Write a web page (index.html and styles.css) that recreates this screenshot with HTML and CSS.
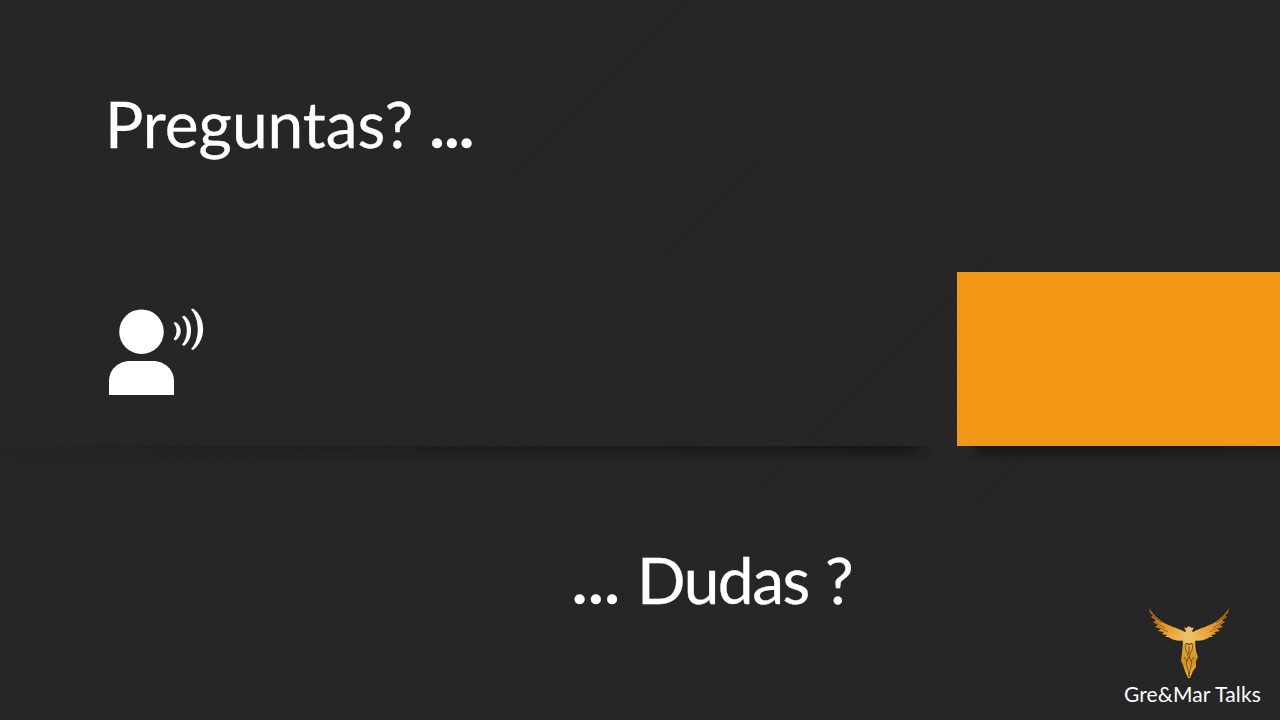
FILE: index.html
```html
<!DOCTYPE html>
<html lang="es">
<head>
<meta charset="utf-8">
<title>Preguntas</title>
<link rel="stylesheet" href="styles.css">
</head>
<body>
<main class="slide">
  <section class="top">
    <div class="left">
      <h1 class="title">Preguntas? <span class="dots">...</span></h1>
      <svg class="speaker" width="96" height="88" viewBox="0 0 96 88" fill="#fff">
        <circle cx="33.500" cy="23.700" r="22.300"/>
        <path d="M1 87V73C1 62 10 53 22 53H45C57 53 66 62 66 73V87Z"/>
        <path d="M65.500 15L67.500 14C74.500 18 74.500 28 67.500 32.500L65.500 31C69.500 27 69.500 19 65.500 15Z"/>
        <path d="M74 9L76 7.500C85.500 14 85.500 31 76 38L74 36.500C80.500 30 80.500 15 74 9Z"/>
        <path d="M83 1.500L85 .5C98.500 10 98.500 32 85 42L83 41C92 32 92 11 83 1.500Z"/>
      </svg>
    </div>
    <div class="accent"></div>
  </section>
  <section class="bottom">
    <p class="dudas"><span class="dots">...</span> <span class="word">Dudas</span> ?</p>
    <div class="brand">
      <svg class="phoenix" width="84" height="74" viewBox="0 0 84 74">
        <defs>
          <linearGradient id="wing" gradientUnits="userSpaceOnUse" x1="2" y1="2" x2="38" y2="32">
            <stop offset="0" stop-color="#a85c0c"/>
            <stop offset=".4" stop-color="#e8921f"/>
            <stop offset="1" stop-color="#ecc064"/>
          </linearGradient>
          <linearGradient id="tail" x1="0" y1="0" x2="0" y2="1">
            <stop offset="0" stop-color="#e6ae4a"/>
            <stop offset=".55" stop-color="#d0901f"/>
            <stop offset="1" stop-color="#f2b84a"/>
          </linearGradient>
          <g id="half">
            <path fill="url(#wing)" d="M1 1C4 6 8 10 13 14C20 19 30 21 37 25L38 33C31 35 25 33 20 30L17 30L19 28L14 27L16 25L10 24L13 22L7 20L10 18L5 15L8 13L3 10L5 8L2 6Z"/>
            <path fill="none" stroke="#262626" stroke-width=".5" d="M5 9L14 16M6 14L17 21M9 19L20 25"/>
            <path fill="#e9b95e" d="M33 24L38 26L39 36L35 36Z"/>
          </g>
        </defs>
        <use href="#half"/>
        <use href="#half" transform="matrix(-1 0 0 1 82 0)"/>
        <path fill="#ecc066" d="M36 20.500L38.500 21L40 19.500L42 19.500L43.500 21L46 20.500L44 24L47 27L45 35L41 37L37 35L35 27L38 24Z"/>
        <path fill="url(#tail)" d="M35 35L41 38L47 35L48 44L50 50L48 54L48 60L45 64L42 71L40 71L37 64L35 58L33 54L34 46Z"/>
        <g fill="none" stroke="#5a3c10" stroke-width=".8">
          <path d="M38 37C35 44 43 47 39 54C37 58 41 62 41 70"/>
          <path d="M44 37C47 44 38 47 43 54C45 58 41 62 41 70"/>
          <path d="M41 39V47M36 50L39 54M46 50L43 54"/>
        </g>
      </svg>
      <p class="brand-name">Gre&amp;Mar Talks</p>
    </div>
  </section>
</main>
</body>
</html>
```

FILE: styles.css
```css
* { box-sizing: border-box; }
html, body { margin: 0; height: 100%; overflow: hidden; background: #252525; }
.slide {
  width: 1280px;
  height: 720px;
  display: flex;
  flex-direction: column;
  color: #fff;
  font-family: "Lato", "Open Sans", "DejaVu Sans", sans-serif;
  background-color: #252525;
  background-image: repeating-linear-gradient(135deg, rgba(255,255,255,.006) 0 2px, rgba(0,0,0,.012) 2px 4px);
}
.top { height: 446px; display: flex; flex: none; gap: 27px; }
.left {
  width: 930px;
  display: flex;
  flex-direction: column;
  padding: 88px 0 0 105px;
  position: relative;
}
.left::after, .accent::after {
  content: "";
  position: absolute;
  top: 100%;
  height: 16px;
  pointer-events: none;
}
.left::after {
  left: 0; right: -4px;
  background:
    linear-gradient(to right, rgba(37,37,37,.95) 0, rgba(37,37,37,.7) 25%, rgba(37,37,37,.25) 70%, rgba(37,37,37,0) 92%, rgba(37,37,37,0) 97%, rgba(37,37,37,1) 100%),
    linear-gradient(to bottom, #171717, #252525);
}
.accent { width: 323px; background: #f29616; position: relative; margin-top: 272px; }
.accent::after {
  left: 12px; right: 0;
  background:
    linear-gradient(to right, rgba(37,37,37,1) 0, rgba(37,37,37,0) 4%, rgba(37,37,37,0) 60%, rgba(37,37,37,.4) 100%),
    linear-gradient(to bottom, #171717, #252525);
}
.title { margin: 0; font-size: 64px; line-height: 72px; font-weight: 400; white-space: nowrap; -webkit-text-stroke: .3px #fff; }
.dots { font-weight: 700; }
.title .dots { letter-spacing: -.5px; }
.speaker { margin: 148px 0 0 3px; display: block; flex: none; }
.bottom { flex: 1; position: relative; display: flex; justify-content: flex-start; padding: 98px 0 0 572px; }
.dudas { margin: 0; font-size: 64px; line-height: 72px; white-space: nowrap; -webkit-text-stroke: .3px #fff; }
.dudas .dots { letter-spacing: 1px; }
.word { letter-spacing: -1.5px; }
.brand {
  position: absolute;
  right: 19px;
  bottom: 15px;
  display: flex;
  flex-direction: column;
  align-items: center;
  gap: 2px;
}
.phoenix { display: block; margin-right: 5px; }
.brand-name { margin: 0; font-size: 21px; line-height: 22px; letter-spacing: .15px; white-space: nowrap; }
```
